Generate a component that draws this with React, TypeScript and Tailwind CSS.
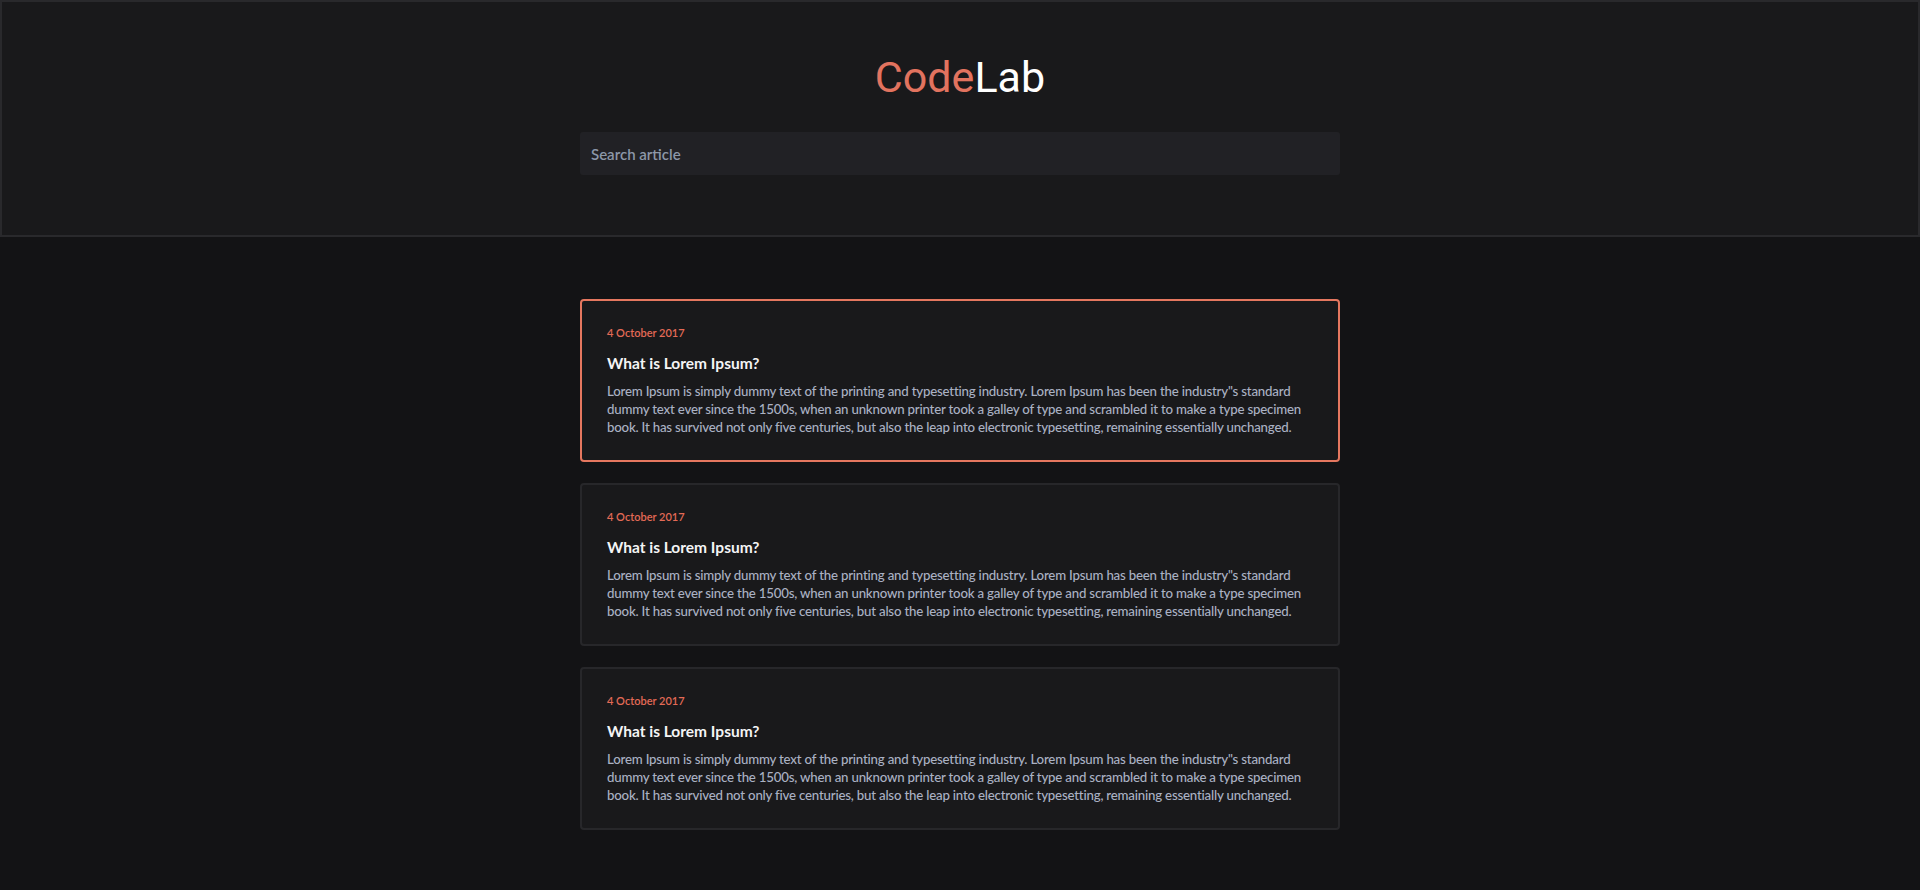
const articles = [1, 2, 3].map((id) => ({
  id,
  date: '4 October 2017',
  title: 'What is Lorem Ipsum?',
  body: 'Lorem Ipsum is simply dummy text of the printing and typesetting industry. Lorem Ipsum has been the industry"s standard dummy text ever since the 1500s, when an unknown printer took a galley of type and scrambled it to make a type specimen book. It has survived not only five centuries, but also the leap into electronic typesetting, remaining essentially unchanged.',
}));

function ArticleCard({ date, title, body, active }: { date: string; title: string; body: string; active?: boolean }) {
  return (
    <article
      className={
        active
          ? 'rounded-[4px] border-2 border-[#e5775f] bg-[#19191b] px-[25px] pt-[24px] pb-[24px]'
          : 'rounded-[4px] border-2 border-[#27272a] bg-[#19191b] px-[25px] pt-[24px] pb-[24px]'
      }
    >
      <p className="text-[11px] font-semibold leading-[16px] text-[#e36a56]">{date}</p>
      <h2 className="mt-[12px] text-[15.5px] font-bold leading-[20px] text-[#f4f4f5]">{title}</h2>
      <p className="mt-[9px] text-[13.25px] font-medium leading-[18px] tracking-[-0.2px] text-[#aab1c3]">{body}</p>
    </article>
  );
}

export default function App() {
  return (
    <div className="min-h-screen bg-[#131315] font-['Lato',sans-serif]">
      {/* Header */}
      <header className="h-[237px] border-2 border-[#29292c] bg-[#19191b] pt-[50px]">
        <h1 className="text-center font-['Roboto',sans-serif] text-[43px] leading-[50px] font-normal">
          <span className="text-[#e2735f]">Code</span>
          <span className="text-white">Lab</span>
        </h1>
        <div className="mx-auto mt-[30px] w-[760px]">
          <input
            type="text"
            placeholder="Search article"
            className="h-[43px] w-full rounded-[3px] bg-[#212125] px-[11px] text-[15px] font-semibold text-[#c8ccd6] outline-none placeholder:text-[#8c97a8]"
          />
        </div>
      </header>

      {/* Articles */}
      <main className="mx-auto flex w-[760px] flex-col gap-[21px] pt-[62px] pb-[60px]">
        {articles.map((a, i) => (
          <ArticleCard key={a.id} date={a.date} title={a.title} body={a.body} active={i === 0} />
        ))}
      </main>
    </div>
  );
}
